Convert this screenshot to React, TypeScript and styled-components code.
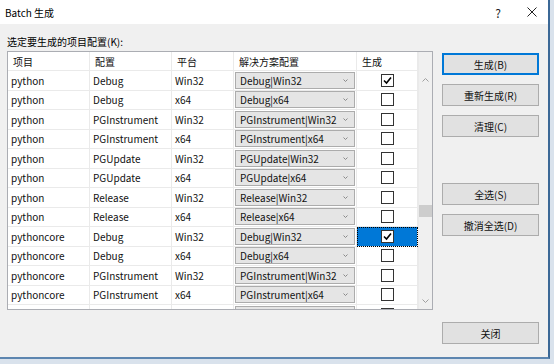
import styled, { createGlobalStyle } from "styled-components";

const GlobalStyle = createGlobalStyle`
  html, body {
    margin: 0;
    padding: 0;
    background: #d9e2ec;
    overflow: hidden;
  }
  body {
    font-family: "Noto Sans CJK SC", "Noto Sans", sans-serif;
    font-size: 10px;
    color: #000;
  }
`;

const cor = {
  fundo: "#f0f0f0",
  borda: "#acacac",
  linha: "#eaeaea",
  azul: "#0078d7",
  botao: "#e1e1e1",
  texto: "#111",
};

const Janela = styled.div`
  width: 548px;
  height: 357px;
  display: flex;
  flex-direction: column;
  background: ${cor.fundo};
  border-right: 2px solid #3b6896;
  border-bottom: 2px solid #5d86b0;
`;

const BarraTitulo = styled.div`
  height: 24px;
  background: #fff;
  display: flex;
  align-items: center;
  padding-left: 5px;
`;

const Titulo = styled.span`
  flex: 1;
`;

const BotaoTitulo = styled.span<{ $largura: number }>`
  width: ${(p) => p.$largura}px;
  display: flex;
  justify-content: center;
  align-items: center;
  font-size: 12px;
  color: #222;
`;

const Corpo = styled.div`
  flex: 1;
  padding: 10px 0 0 7px;
  display: flex;
  flex-direction: column;
`;

const Rotulo = styled.div`
  height: 17px;
  line-height: 16px;
`;

const Conteudo = styled.div`
  display: flex;
  gap: 9px;
  height: 293px;
`;

const Grade = styled.div`
  width: 424px;
  height: 257px;
  border: 1px solid #abadb3;
  background: #fff;
  display: flex;
  overflow: hidden;
`;

const Tabela = styled.div`
  width: 410px;
  display: flex;
  flex-direction: column;
`;

const Linha = styled.div<{ $altura: number }>`
  display: grid;
  grid-template-columns: 82px 82px 62px 123px 61px;
  height: ${(p) => p.$altura}px;
  flex-shrink: 0;
`;

const Celula = styled.div<{ $cabecalho?: boolean }>`
  display: flex;
  align-items: center;
  padding-left: ${(p) => (p.$cabecalho ? 5 : 3)}px;
  border-right: 1px solid ${cor.linha};
  border-bottom: 1px solid ${cor.linha};
  white-space: nowrap;
  overflow: hidden;
  color: ${cor.texto};
`;

const CelulaCombo = styled.div`
  display: flex;
  align-items: center;
  padding: 0 1px;
  border-right: 1px solid ${cor.linha};
  border-bottom: 1px solid ${cor.linha};
`;

const Combo = styled.div`
  flex: 1;
  height: 15px;
  border: 1px solid ${cor.borda};
  background: #e5e5e5;
  display: flex;
  align-items: center;
  padding-left: 4px;
  padding-right: 6px;
  color: ${cor.texto};
  white-space: nowrap;
  overflow: hidden;
`;

const TextoCombo = styled.span`
  flex: 1;
  overflow: hidden;
`;

const SetaComboBox = styled.span`
  flex-shrink: 0;
  display: flex;
  margin-left: 4px;
`;

const CelulaCaixa = styled.div<{ $selecionada?: boolean }>`
  display: flex;
  align-items: center;
  justify-content: center;
  border-right: 1px solid ${cor.linha};
  border-bottom: 1px solid ${cor.linha};
  background: ${(p) => (p.$selecionada ? cor.azul : "transparent")};
  outline: ${(p) => (p.$selecionada ? "1px dotted #000" : "none")};
  outline-offset: -1px;
`;

const Caixa = styled.div`
  width: 11px;
  height: 11px;
  border: 1px solid #333;
  background: #fff;
  display: flex;
  align-items: center;
  justify-content: center;
`;

const BarraRolagem = styled.div`
  width: 14px;
  background: ${cor.fundo};
  display: flex;
  flex-direction: column;
  align-items: center;
  border-left: 1px solid ${cor.linha};
`;

const Seta = styled.div<{ $topo?: number }>`
  height: 17px;
  display: flex;
  align-items: center;
  justify-content: center;
  margin-top: ${(p) => p.$topo ?? 0}px;
`;

const Trilho = styled.div`
  flex: 1;
  width: 100%;
  position: relative;
`;

const Polegar = styled.div`
  position: absolute;
  left: 0;
  right: 0;
  top: 117px;
  height: 12px;
  background: #cdcdcd;
`;

const ColunaBotoes = styled.div`
  width: 97px;
  padding-top: 2px;
  display: flex;
  flex-direction: column;
`;

const Grupo = styled.div<{ $margem?: number }>`
  display: flex;
  flex-direction: column;
  gap: 9px;
  margin-top: ${(p) => p.$margem ?? 0}px;
`;

const Botao = styled.button<{ $padrao?: boolean }>`
  height: 22px;
  width: 97px;
  box-sizing: border-box;
  background: ${cor.botao};
  border: 1px solid ${(p) => (p.$padrao ? cor.azul : cor.borda)};
  box-shadow: ${(p) => (p.$padrao ? `inset 0 0 0 1px ${cor.azul}` : "none")};
  font-family: inherit;
  font-size: 10px;
  color: #111;
  padding: 0;
  border-radius: 0;
`;

const BotaoFechar = styled(Botao)`
  margin-top: auto;
`;

const Chevron = ({ cima }: { cima?: boolean }) => (
  <svg width="7" height="4" viewBox="0 0 7 4">
    <polyline
      points={cima ? "0.5,3.5 3.5,0.5 6.5,3.5" : "0.5,0.5 3.5,3.5 6.5,0.5"}
      fill="none"
      stroke="#a0a0a0"
      strokeWidth="1"
    />
  </svg>
);

const SetaCombo = () => (
  <SetaComboBox>
    <svg width="5" height="3" viewBox="0 0 5 3">
      <polyline points="0.5,0.5 2.5,2.5 4.5,0.5" fill="none" stroke="#8a8a8a" strokeWidth="1" />
    </svg>
  </SetaComboBox>
);

const Marca = () => (
  <svg width="9" height="9" viewBox="0 0 9 9">
    <polyline points="1,4.5 3.5,7 8,1.5" fill="none" stroke="#000" strokeWidth="1.6" />
  </svg>
);

const linhas = [
  ["python", "Debug", "Win32", true],
  ["python", "Debug", "x64", false],
  ["python", "PGInstrument", "Win32", false],
  ["python", "PGInstrument", "x64", false],
  ["python", "PGUpdate", "Win32", false],
  ["python", "PGUpdate", "x64", false],
  ["python", "Release", "Win32", false],
  ["python", "Release", "x64", false],
  ["pythoncore", "Debug", "Win32", true],
  ["pythoncore", "Debug", "x64", false],
  ["pythoncore", "PGInstrument", "Win32", false],
  ["pythoncore", "PGInstrument", "x64", false],
  ["pythoncore", "PGUpdate", "Win32", false],
] as const;

export default function App() {
  return (
    <>
      <GlobalStyle />
      <Janela>
        <BarraTitulo>
          <Titulo>Batch 生成</Titulo>
          <BotaoTitulo $largura={36}>?</BotaoTitulo>
          <BotaoTitulo $largura={32}>
            <svg width="10" height="10" viewBox="0 0 10 10">
              <path d="M0.5 0.5 L9.5 9.5 M9.5 0.5 L0.5 9.5" stroke="#222" strokeWidth="1" />
            </svg>
          </BotaoTitulo>
        </BarraTitulo>
        <Corpo>
          <Rotulo>选定要生成的项目配置(K):</Rotulo>
          <Conteudo>
            <Grade>
              <Tabela>
                <Linha $altura={19}>
                  <Celula $cabecalho>项目</Celula>
                  <Celula $cabecalho>配置</Celula>
                  <Celula $cabecalho>平台</Celula>
                  <Celula $cabecalho>解决方案配置</Celula>
                  <Celula $cabecalho>生成</Celula>
                </Linha>
                {linhas.map(([projeto, config, plataforma, marcado], i) => (
                  <Linha key={i} $altura={19.5}>
                    <Celula>{projeto}</Celula>
                    <Celula>{config}</Celula>
                    <Celula>{plataforma}</Celula>
                    <CelulaCombo>
                      <Combo>
                        <TextoCombo>
                          {config}|{plataforma}
                        </TextoCombo>
                        <SetaCombo />
                      </Combo>
                    </CelulaCombo>
                    <CelulaCaixa $selecionada={i === 8}>
                      <Caixa>{marcado && <Marca />}</Caixa>
                    </CelulaCaixa>
                  </Linha>
                ))}
              </Tabela>
              <BarraRolagem>
                <Seta $topo={19}>
                  <Chevron cima />
                </Seta>
                <Trilho>
                  <Polegar />
                </Trilho>
                <Seta>
                  <Chevron />
                </Seta>
              </BarraRolagem>
            </Grade>
            <ColunaBotoes>
              <Grupo>
                <Botao $padrao>生成(B)</Botao>
                <Botao>重新生成(R)</Botao>
                <Botao>清理(C)</Botao>
              </Grupo>
              <Grupo $margem={46}>
                <Botao>全选(S)</Botao>
                <Botao>撤消全选(D)</Botao>
              </Grupo>
              <BotaoFechar>关闭</BotaoFechar>
            </ColunaBotoes>
          </Conteudo>
        </Corpo>
      </Janela>
    </>
  );
}
